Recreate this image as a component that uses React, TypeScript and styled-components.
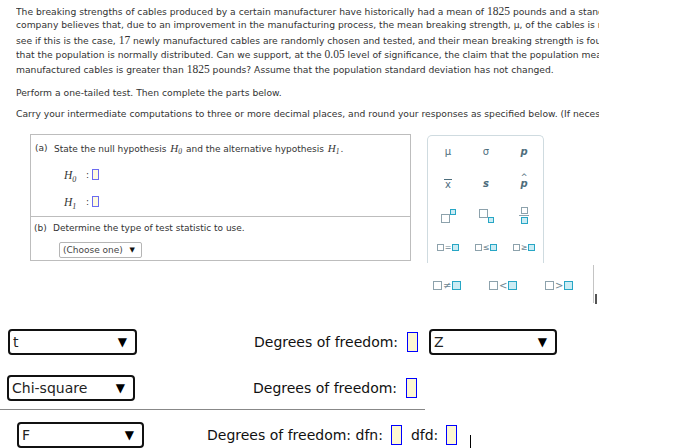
import React from 'react';
import styled, { createGlobalStyle } from 'styled-components';

const GlobalStyle = createGlobalStyle`
  html, body { margin: 0; padding: 0; background: #fff; }
  body { font-family: "DejaVu Sans", Verdana, sans-serif; }
`;

const Page = styled.div`
  width: 673px;
  height: 448px;
  overflow: hidden;
  background: #fff;
`;

/* ---------- intro text ---------- */
const Intro = styled.div`
  margin-left: 16px;
  padding-top: 4px;
  width: 583px;
  overflow: hidden;
  font-size: 9.2px;
  color: #333;
`;

const Para = styled.div<{ $gap?: number }>`
  margin-top: ${p => p.$gap ?? 0}px;
`;

const Line = styled.div`
  white-space: nowrap;
  line-height: 14.4px;
  height: 14.4px;
`;

const Num = styled.span`
  font-family: "Liberation Serif", serif;
  font-size: 11.5px;
`;

/* ---------- question box + palette ---------- */
const WorkRow = styled.div`
  display: flex;
  align-items: flex-start;
  gap: 16px;
  margin: 12px 0 0 30px;
`;

const QuestionBox = styled.div`
  width: 381px;
  height: 127px;
  box-sizing: border-box;
  border: 1px solid #bdbdbd;
  display: flex;
  flex-direction: column;
`;

const PartA = styled.div`
  height: 82px;
  box-sizing: border-box;
  border-bottom: 1px solid #bdbdbd;
  padding: 7px 0 0 4px;
`;

const PartB = styled.div`
  padding: 5px 0 0 3px;
`;

const PartTitle = styled.div`
  display: flex;
  font-size: 9px;
  line-height: 12px;
  color: #333;
  white-space: nowrap;
`;

const Tag = styled.span`
  width: 19px;
`;

const MathVar = styled.span`
  font-family: "Liberation Serif", serif;
  font-style: italic;
  font-size: 11px;
  margin: 0 1px;
  sub {
    font-size: 7.5px;
    vertical-align: -2px;
    line-height: 0;
  }
`;

const HypRow = styled.div<{ $gap: number }>`
  display: flex;
  align-items: center;
  height: 16px;
  margin: ${p => p.$gap}px 0 0 29px;
`;

const HypLabel = styled.span`
  width: 22px;
  font-family: "Liberation Serif", serif;
  font-style: italic;
  font-size: 11.5px;
  color: #333;
  sub {
    font-size: 8px;
    vertical-align: -3px;
    line-height: 0;
  }
`;

const Colon = styled.span`
  font-size: 9px;
  color: #333;
  margin-right: 3px;
`;

const SmallInput = styled.span`
  display: inline-block;
  width: 7px;
  height: 11px;
  box-sizing: border-box;
  border: 1px solid #6b6bf0;
  background: #fffbe0;
`;

const MiniSelect = styled.div`
  margin: 8px 0 0 25px;
  width: 83px;
  height: 16px;
  box-sizing: border-box;
  border: 1px solid #b5b5b5;
  border-radius: 2px;
  display: flex;
  align-items: center;
  justify-content: space-between;
  padding: 0 6px 0 3px;
  font-size: 9px;
  color: #444;
`;

const MiniArrow = styled.span`
  font-size: 7px;
  color: #111;
`;

const Palette = styled.div`
  width: 117px;
  height: 128px;
  box-sizing: border-box;
  margin-top: 1px;
  border: 1px solid #cfdbe0;
  border-bottom: none;
  border-radius: 5px 5px 0 0;
  display: grid;
  grid-template-columns: repeat(3, 38px);
  grid-auto-rows: 32px;
  padding-left: 1px;
`;

const Cell = styled.div<{ $italic?: boolean }>`
  display: flex;
  align-items: center;
  justify-content: center;
  color: #4d6d7c;
  font-size: 10px;
  font-style: ${p => (p.$italic ? 'italic' : 'normal')};
  font-weight: ${p => (p.$italic ? 700 : 400)};
`;

const Bar = styled.span`
  display: inline-block;
  border-top: 1px solid #4d6d7c;
  line-height: 9px;
  padding: 0 1px;
`;

const Hat = styled.span`
  display: inline-flex;
  flex-direction: column;
  align-items: center;
  line-height: 8px;
  margin-top: -4px;
  &::before {
    content: '^';
    font-size: 8px;
    line-height: 5px;
    font-weight: 400;
    font-style: normal;
  }
`;

const Sq = styled.span<{ $s: number; $teal?: boolean }>`
  display: inline-block;
  width: ${p => p.$s}px;
  height: ${p => p.$s}px;
  box-sizing: border-box;
  border: 1.5px solid ${p => (p.$teal ? '#27a6c5' : '#8da2ac')};
  background: ${p => (p.$teal ? '#cbecf4' : '#fff')};
  flex: none;
`;

const SupIcon = styled.span<{ $sub?: boolean }>`
  display: flex;
  align-items: ${p => (p.$sub ? 'flex-end' : 'flex-start')};
  height: 14px;
  & > span:first-child {
    align-self: ${p => (p.$sub ? 'flex-start' : 'flex-end')};
  }
`;

const FracIcon = styled.span`
  display: flex;
  flex-direction: column;
  align-items: center;
  gap: 1px;
`;

const FracBar = styled.span`
  width: 10px;
  height: 1px;
  background: #8da2ac;
`;

const Rel = styled.span<{ $big?: boolean }>`
  display: flex;
  align-items: center;
  gap: 1px;
  font-size: ${p => (p.$big ? 10 : 8)}px;
  color: #6d8794;
`;

const RelRow = styled.div`
  display: flex;
  align-items: flex-start;
  gap: 22px;
  height: 39px;
  margin-left: 433px;
`;

const RelItem = styled.div`
  width: 34px;
  padding-top: 17px;
`;

const VLine = styled.div`
  position: relative;
  width: 1px;
  height: 38px;
  margin: 2px 0 0 -8px;
  background: #c4c4c4;
  &::after {
    content: '';
    position: absolute;
    left: 2px;
    top: 29px;
    width: 2px;
    height: 10px;
    background: #555;
  }
`;

/* ---------- bottom selects ---------- */
const BottomRow = styled.div<{ $mt: number }>`
  display: flex;
  align-items: center;
  height: 26px;
  margin-top: ${p => p.$mt}px;
`;

const Select = styled.div<{ $ml: number; $w: number }>`
  margin-left: ${p => p.$ml}px;
  width: ${p => p.$w}px;
  height: 26px;
  box-sizing: border-box;
  border: 2px solid #111;
  border-radius: 4px;
  display: flex;
  align-items: center;
  justify-content: space-between;
  padding: 0 8px 0 3px;
  font-size: 14px;
  color: #222;
  background: #fff;
`;

const Arrow = styled.span`
  font-size: 12px;
  color: #000;
`;

const Label = styled.span<{ $ml: number }>`
  margin-left: ${p => p.$ml}px;
  font-size: 14px;
  color: #111;
  white-space: nowrap;
`;

const Blank = styled.span<{ $ml: number }>`
  margin-left: ${p => p.$ml}px;
  width: 11px;
  height: 20px;
  box-sizing: border-box;
  border: 1px solid #0000ff;
  background: #fdf7d2;
  flex: none;
`;

const HRule = styled.div`
  width: 425px;
  height: 1px;
  background: #888;
  margin-top: 8px;
`;

const Cursor = styled.span`
  margin-left: 13px;
  width: 1px;
  height: 14px;
  background: #000;
  align-self: flex-end;
  margin-bottom: -1px;
`;

const H = ({ i }: { i: string }) => (
  <MathVar>
    H<sub>{i}</sub>
  </MathVar>
);

export default function App() {
  return (
    <Page>
      <GlobalStyle />
      <Intro>
        <Para>
          <Line>
            The breaking strengths of cables produced by a certain manufacturer have historically had a mean of{' '}
            <Num>1825</Num> pounds and a standard deviation of
          </Line>
          <Line>
            company believes that, due to an improvement in the manufacturing process, the mean breaking strength, μ, of the cables is now
          </Line>
          <Line>
            see if this is the case, <Num>17</Num> newly manufactured cables are randomly chosen and tested, and their mean breaking strength is found
          </Line>
          <Line>
            that the population is normally distributed. Can we support, at the <Num>0.05</Num> level of significance, the claim that the population mean
          </Line>
          <Line>
            manufactured cables is greater than <Num>1825</Num> pounds? Assume that the population standard deviation has not changed.
          </Line>
        </Para>
        <Para $gap={10}>
          <Line>Perform a one-tailed test. Then complete the parts below.</Line>
        </Para>
        <Para $gap={7}>
          <Line>
            Carry your intermediate computations to three or more decimal places, and round your responses as specified below. (If necessary
          </Line>
        </Para>
      </Intro>

      <WorkRow>
        <QuestionBox>
          <PartA>
            <PartTitle>
              <Tag>(a)</Tag>
              <span>
                State the null hypothesis <H i="0" /> and the alternative hypothesis <H i="1" />.
              </span>
            </PartTitle>
            <HypRow $gap={12}>
              <HypLabel>
                H<sub>0</sub>
              </HypLabel>
              <Colon>:</Colon>
              <SmallInput />
            </HypRow>
            <HypRow $gap={11}>
              <HypLabel>
                H<sub>1</sub>
              </HypLabel>
              <Colon>:</Colon>
              <SmallInput />
            </HypRow>
          </PartA>
          <PartB>
            <PartTitle>
              <Tag>(b)</Tag>
              <span>Determine the type of test statistic to use.</span>
            </PartTitle>
            <MiniSelect>
              <span>(Choose one)</span>
              <MiniArrow>▼</MiniArrow>
            </MiniSelect>
          </PartB>
        </QuestionBox>

        <Palette>
          <Cell>μ</Cell>
          <Cell>σ</Cell>
          <Cell $italic>p</Cell>
          <Cell>
            <Bar>x</Bar>
          </Cell>
          <Cell $italic>s</Cell>
          <Cell $italic>
            <Hat>p</Hat>
          </Cell>
          <Cell>
            <SupIcon>
              <Sq $s={9} />
              <Sq $s={6} $teal />
            </SupIcon>
          </Cell>
          <Cell>
            <SupIcon $sub>
              <Sq $s={9} />
              <Sq $s={6} $teal />
            </SupIcon>
          </Cell>
          <Cell>
            <FracIcon>
              <Sq $s={7} />
              <FracBar />
              <Sq $s={7} $teal />
            </FracIcon>
          </Cell>
          <Cell>
            <Rel>
              <Sq $s={7} />=<Sq $s={7} $teal />
            </Rel>
          </Cell>
          <Cell>
            <Rel>
              <Sq $s={7} />≤<Sq $s={7} $teal />
            </Rel>
          </Cell>
          <Cell>
            <Rel>
              <Sq $s={7} />≥<Sq $s={7} $teal />
            </Rel>
          </Cell>
        </Palette>
      </WorkRow>

      <RelRow>
        <RelItem>
          <Rel $big>
            <Sq $s={9} />≠<Sq $s={9} $teal />
          </Rel>
        </RelItem>
        <RelItem>
          <Rel $big>
            <Sq $s={9} />&lt;<Sq $s={9} $teal />
          </Rel>
        </RelItem>
        <RelItem>
          <Rel $big>
            <Sq $s={9} />&gt;<Sq $s={9} $teal />
          </Rel>
        </RelItem>
        <VLine />
      </RelRow>

      <BottomRow $mt={27}>
        <Select $ml={8} $w={129}>
          <span>t</span>
          <Arrow>▼</Arrow>
        </Select>
        <Label $ml={117}>Degrees of freedom:</Label>
        <Blank $ml={9} />
        <Select $ml={11} $w={128}>
          <span>Z</span>
          <Arrow>▼</Arrow>
        </Select>
      </BottomRow>

      <BottomRow $mt={20}>
        <Select $ml={7} $w={128}>
          <span>Chi-square</span>
          <Arrow>▼</Arrow>
        </Select>
        <Label $ml={118}>Degrees of freedom:</Label>
        <Blank $ml={9} />
      </BottomRow>

      <HRule />

      <BottomRow $mt={12}>
        <Select $ml={17} $w={127}>
          <span>F</span>
          <Arrow>▼</Arrow>
        </Select>
        <Label $ml={63}>Degrees of freedom: dfn:</Label>
        <Blank $ml={8} />
        <Label $ml={9}>dfd:</Label>
        <Blank $ml={8} />
        <Cursor />
      </BottomRow>
    </Page>
  );
}
